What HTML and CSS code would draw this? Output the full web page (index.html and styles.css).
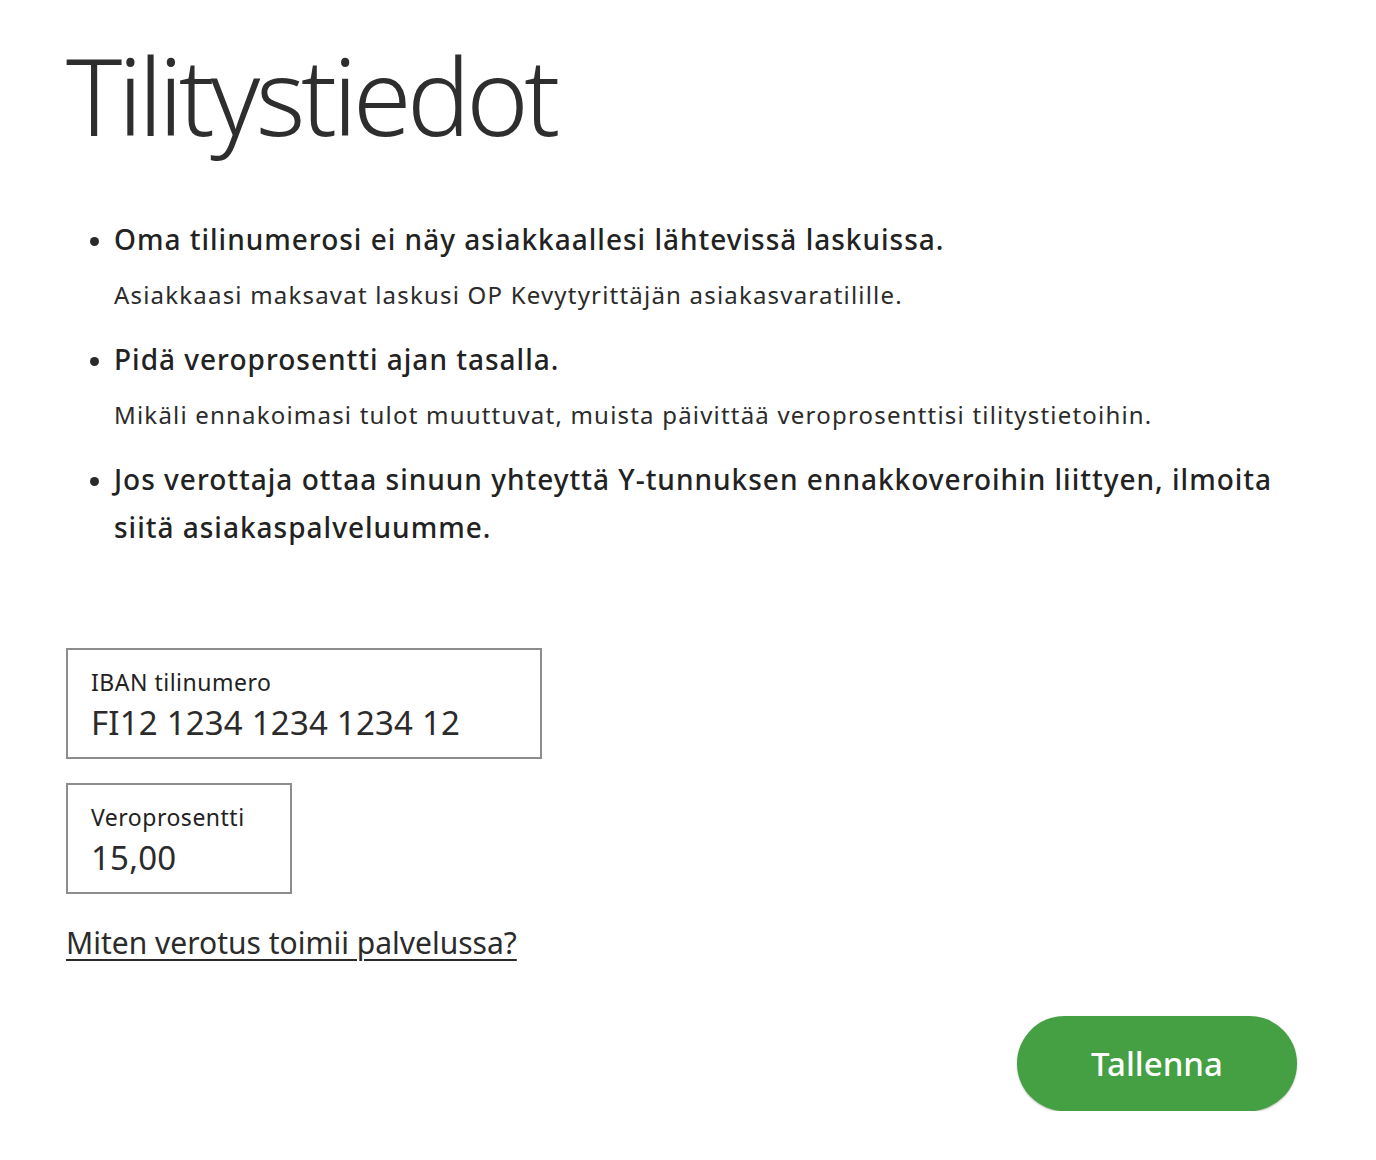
FILE: index.html
```html
<!DOCTYPE html>
<html lang="fi">
<head>
<meta charset="utf-8">
<title>Tilitystiedot</title>
<link rel="stylesheet" href="styles.css">
</head>
<body>
<main class="page">
  <h1 class="title">Tilitystiedot</h1>
  <ul class="notes">
    <li class="note">
      <p class="note-head">Oma tilinumerosi ei näy asiakkaallesi lähtevissä laskuissa.</p>
      <p class="note-body">Asiakkaasi maksavat laskusi OP Kevytyrittäjän asiakasvaratilille.</p>
    </li>
    <li class="note">
      <p class="note-head">Pidä veroprosentti ajan tasalla.</p>
      <p class="note-body">Mikäli ennakoimasi tulot muuttuvat, muista päivittää veroprosenttisi tilitystietoihin.</p>
    </li>
    <li class="note">
      <p class="note-head">Jos verottaja ottaa sinuun yhteyttä Y-tunnuksen ennakkoveroihin liittyen, ilmoita siitä asiakaspalveluumme.</p>
    </li>
  </ul>
  <div class="fields">
    <label class="field field-iban">
      <span class="field-label">IBAN tilinumero</span>
      <span class="field-value">FI12 1234 1234 1234 12</span>
    </label>
    <label class="field field-tax">
      <span class="field-label">Veroprosentti</span>
      <span class="field-value">15,00</span>
    </label>
  </div>
  <a class="help-link" href="#">Miten verotus toimii palvelussa?</a>
  <div class="actions">
    <button class="save-btn" type="button">Tallenna</button>
  </div>
</main>
</body>
</html>
```
FILE: styles.css
```css
html, body {
  margin: 0;
  padding: 0;
  background: #ffffff;
}
body {
  font-family: "Noto Sans", "DejaVu Sans", sans-serif;
  color: #2b2b2b;
}
.page {
  width: 1231px;
  padding: 20px 0 0 66px;
}
.title {
  margin: 0;
  font-size: 106px;
  font-weight: 300;
  line-height: 150px;
  letter-spacing: -4.4px;
  color: #2e2e2e;
}
.notes {
  margin: 45px 0 0 0;
  padding: 0 0 0 48px;
  list-style: disc;
}
.note {
  font-size: 28px;
}
.note::marker {
  font-size: 24px;
}
.note-head {
  margin: 0;
  font-size: 28px;
  font-weight: 500;
  line-height: 48px;
  letter-spacing: 1px;
  color: #222;
}
.note-body {
  margin: 6px 0 14px 0;
  font-size: 24px;
  line-height: 52px;
  letter-spacing: 1.2px;
  color: #2b2b2b;
}
.fields {
  margin-top: 97px;
  display: flex;
  flex-direction: column;
  align-items: flex-start;
  gap: 24px;
}
.field {
  display: flex;
  flex-direction: column;
  box-sizing: border-box;
  height: 111px;
  padding: 14px 22px 0 23px;
  border: 2px solid #8d8d8d;
}
.field-iban { width: 476px; }
.field-tax { width: 226px; }
.field-label {
  font-size: 23px;
  line-height: 36px;
  letter-spacing: 0.5px;
  color: #222;
}
.field-value {
  font-size: 33px;
  line-height: 46px;
  letter-spacing: 0.2px;
  color: #2b2b2b;
}
.help-link {
  display: inline-block;
  margin-top: 27px;
  font-size: 30px;
  line-height: 44px;
  color: #2b2b2b;
  text-decoration: underline;
  text-underline-offset: 5px;
  text-decoration-thickness: 2px;
}
.actions {
  display: flex;
  justify-content: flex-end;
  margin-top: 51px;
}
.save-btn {
  width: 280px;
  height: 95px;
  border: none;
  border-radius: 48px;
  background: #44a043;
  color: #ffffff;
  font-family: "Noto Sans", "DejaVu Sans", sans-serif;
  font-size: 33px;
  font-weight: 500;
  box-shadow: 0 1px 2px rgba(0,0,0,0.25);
}
```
